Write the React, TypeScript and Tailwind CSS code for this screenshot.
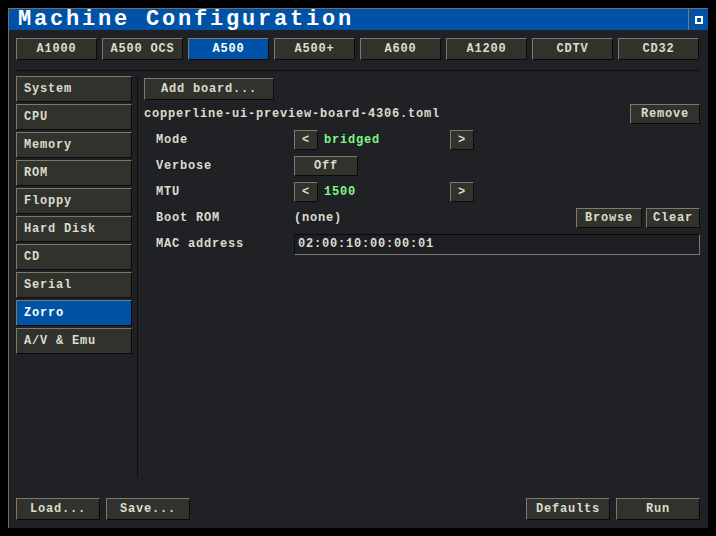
import React from 'react';

const MODELS = ['A1000', 'A500 OCS', 'A500', 'A500+', 'A600', 'A1200', 'CDTV', 'CD32'];
const SECTIONS = ['System', 'CPU', 'Memory', 'ROM', 'Floppy', 'Hard Disk', 'CD', 'Serial', 'Zorro', 'A/V & Emu'];

const font = "font-['Liberation_Mono',monospace] font-bold text-[12px] tracking-[0.8px] leading-none";

// Amiga-style bevelled button
const Btn: React.FC<{ label: string; active?: boolean; className?: string; align?: 'left' | 'center' }> = ({
  label,
  active,
  className = '',
  align = 'center',
}) => (
  <div
    className={`flex items-center border-t border-l border-t-[#7a7a71] border-l-[#7a7a71] border-b border-r border-b-[#0a0a0a] border-r-[#0a0a0a] text-[#dcdccf] whitespace-pre ${
      active ? 'bg-[#0052a6] text-white' : 'bg-[#31322c]'
    } ${align === 'left' ? 'justify-start pl-[7px]' : 'justify-center'} ${className}`}
  >
    {label}
  </div>
);

const Row: React.FC<{ label: string; children: React.ReactNode }> = ({ label, children }) => (
  <div className="flex items-center h-[20px]">
    <div className="w-[150px] pl-[12px] text-[#dcdccf]">{label}</div>
    <div className="flex-1 flex items-center h-full">{children}</div>
  </div>
);

const App: React.FC = () => {
  return (
    <div className={`w-[716px] h-[536px] bg-black pt-[8px] pl-[8px] ${font}`}>
      <div className="w-[700px] h-[520px] bg-[#202125] border-t border-l border-[#6f6f68] flex flex-col">
        {/* Title bar */}
        <div className="h-[21px] bg-[#0052a6] flex items-center shrink-0">
          <div className="flex-1 pl-[9px] text-white text-[22px] tracking-[2.8px] leading-none">Machine Configuration</div>
          <div className="w-[20px] h-full border-l border-[#7a7a71] flex items-center justify-center">
            <div className="w-[8px] h-[8px] bg-white flex items-center justify-center">
              <div className="w-[4px] h-[4px] bg-[#0052a6]" />
            </div>
          </div>
        </div>

        <div className="flex-1 flex flex-col pl-[7px] pr-[8px]">
          {/* Model tabs */}
          <div className="flex gap-[5px] mt-[8px] h-[22px]">
            {MODELS.map(m => (
              <Btn key={m} label={m} active={m === 'A500'} className="w-[81px] h-full" />
            ))}
          </div>

          <div className="h-px bg-[#0e0e10] mt-[10px]" />

          {/* Main area */}
          <div className="flex mt-[5px] h-[402px]">
            <div className="w-[116px] flex flex-col gap-[2px]">
              {SECTIONS.map(s => (
                <Btn key={s} label={s} active={s === 'Zorro'} align="left" className="h-[26px]" />
              ))}
            </div>
            <div className="w-px bg-[#0e0e10] ml-[5px] mr-[6px]" />
            <div className="flex-1 flex flex-col pt-[2px]">
              <Btn label="Add board..." className="w-[130px] h-[22px]" />
              <div className="flex items-center justify-between h-[20px] mt-[4px]">
                <span className="text-[#dcdccf]">copperline-ui-preview-board-4306.toml</span>
                <Btn label="Remove" className="w-[70px] h-full" />
              </div>
              <div className="flex flex-col gap-[6px] mt-[6px]">
                <Row label="Mode">
                  <Btn label="<" className="w-[24px] h-full" />
                  <span className="w-[132px] pl-[6px] text-[#82f58c]">bridged</span>
                  <Btn label=">" className="w-[24px] h-full" />
                </Row>
                <Row label="Verbose">
                  <Btn label="Off" className="w-[64px] h-full" />
                </Row>
                <Row label="MTU">
                  <Btn label="<" className="w-[24px] h-full" />
                  <span className="w-[132px] pl-[6px] text-[#82f58c]">1500</span>
                  <Btn label=">" className="w-[24px] h-full" />
                </Row>
                <Row label="Boot ROM">
                  <span className="flex-1 text-[#dcdccf]">(none)</span>
                  <Btn label="Browse" className="w-[66px] h-full" />
                  <Btn label="Clear" className="w-[54px] h-full ml-[4px]" />
                </Row>
                <Row label="MAC address">
                  <div className="flex-1 h-[21px] flex items-center pl-[3px] bg-[#1e1f23] border-t border-l border-t-[#0a0a0a] border-l-[#0a0a0a] border-b border-r border-b-[#7a7a71] border-r-[#7a7a71] text-[#dcdccf]">
                    02:00:10:00:00:01
                  </div>
                </Row>
              </div>
            </div>
          </div>

          {/* Bottom buttons */}
          <div className="flex mt-[20px] h-[22px]">
            <Btn label="Load..." className="w-[84px] h-full" />
            <Btn label="Save..." className="w-[84px] h-full ml-[6px]" />
            <div className="flex-1" />
            <Btn label="Defaults" className="w-[84px] h-full" />
            <Btn label="Run" className="w-[84px] h-full ml-[6px]" />
          </div>
        </div>
      </div>
    </div>
  );
};

export default App;
